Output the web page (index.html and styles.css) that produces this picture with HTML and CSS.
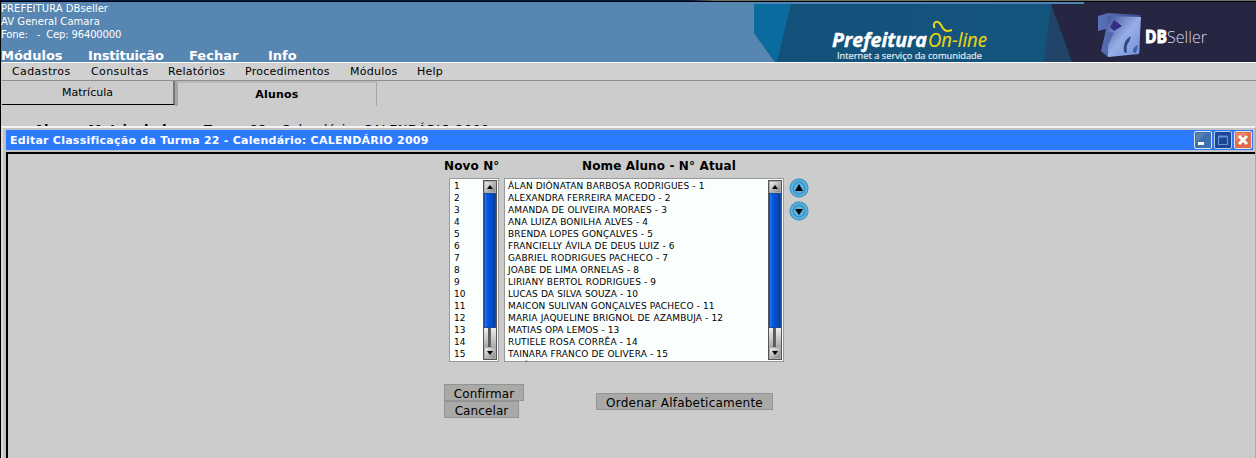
FILE: index.html
```html
<!DOCTYPE html>
<html lang="pt-BR">
<head>
<meta charset="utf-8">
<title>Prefeitura On-line</title>
<link rel="stylesheet" href="styles.css">
</head>
<body>
<div class="page">
  <div class="strip"></div>
  <header class="header">
    <div class="header-main">
      <div class="org"><span>PREFEITURA DBseller</span><span>AV General Camara</span><span class="pre">Fone:   -  Cep: 96400000</span></div>
      <nav class="modules"><span>Módulos</span><span>Instituição</span><span>Fechar</span><span>Info</span></nav>
    </div>
    <svg class="banner" width="502" height="60" viewBox="754 2 502 60">
      <defs>
        <linearGradient id="sea" x1="0" x2="1"><stop offset="0" stop-color="#13517a"/><stop offset=".8" stop-color="#14567f"/><stop offset="1" stop-color="#165985"/></linearGradient>
        <linearGradient id="cube" x1="0" y1="0" x2="1" y2="1"><stop offset="0" stop-color="#3d5299"/><stop offset=".5" stop-color="#98aee6"/><stop offset="1" stop-color="#6f8fd8"/></linearGradient>
        <linearGradient id="side" x1="0" x2="1"><stop offset="0" stop-color="#5a72b8"/><stop offset="1" stop-color="#3c4e98"/></linearGradient>
      </defs>
      <path d="M754 4H1256V62H775L754 33Z" fill="url(#sea)"/>
      <path d="M754 4H791L777 62H775L754 33Z" fill="#0a6c9e"/>
      <path d="M1051 4H1256V62H1044Z" fill="#214569"/>
      <path d="M1084 2H1256V62H1072L1051 4H1084Z" fill="#262642"/>
      <path d="M754 2H1084V4H754Z" fill="#4d86b3"/>
      <text class="logo-bold" x="832" y="47" textLength="95" lengthAdjust="spacingAndGlyphs">Prefeitura</text>
      <text class="logo-light" x="928" y="47" textLength="59" lengthAdjust="spacingAndGlyphs">On-line</text>
      <path d="M934.500 28C932 21 938 20 941 25C944 31 946 32 952 30" fill="none" stroke="#ead512" stroke-width="2"/>
      <text class="logo-sub" x="837" y="58.500" textLength="145" lengthAdjust="spacingAndGlyphs">Internet a serviço da comunidade</text>
      <g class="cube">
        <path d="M1098 16L1108 13L1140 15V52L1108 57L1101 51L1105 34L1106 29L1098 31Z" fill="url(#side)"/>
        <path d="M1108 16L1141 17L1139 54L1108 57L1108 45L1114 33L1107 31Z" fill="url(#cube)"/>
        <path d="M1114 20L1122 26L1114 31L1110 27Z" fill="#332d83"/>
        <path d="M1124 52C1123 43 1126 39 1131 36L1129 42C1127 44 1126 47 1127 53Z" fill="#334486"/>
        <path d="M1133 52C1133 48 1135 46 1138 45L1136 53Z" fill="#465ba5"/>
      </g>
      <text class="db" x="1145" y="43" textLength="22" lengthAdjust="spacingAndGlyphs">DB</text>
      <text class="seller" x="1167" y="43" textLength="40" lengthAdjust="spacingAndGlyphs">Seller</text>
    </svg>
  </header>
  <nav class="menu"><span>Cadastros</span><span>Consultas</span><span>Relatórios</span><span>Procedimentos</span><span>Módulos</span><span>Help</span></nav>
  <div class="tabs"><div class="tab">Matrícula</div><div class="tab active">Alunos</div></div>
  <div class="behind"><b>Alunos Matriculados</b><span>Turma 22 - Calendário: CALENDÁRIO 2009</span></div>
  <section class="window">
    <div class="titlebar">
      <span class="title">Editar Classificação da Turma 22 - Calendário: CALENDÁRIO 2009</span>
      <div class="controls">
        <svg width="18" height="18" viewBox="0 0 18 18"><rect x=".5" y=".5" width="17" height="17" rx="1.500" fill="#3e70b0" stroke="#d9e3ea"/><path d="M2 2H12L2 12Z" fill="#547fb0"/><path d="M4 11H10V14H4Z" fill="#fff"/></svg>
        <svg width="18" height="18" viewBox="0 0 18 18"><rect x=".5" y=".5" width="17" height="17" rx="1.500" fill="#1d4595" stroke="#b9cbe2"/><path d="M4.500 5H13.500V13.500H4.500ZM4 6H14" fill="none" stroke="#6493d7" stroke-width="1.200"/></svg>
        <svg width="18" height="18" viewBox="0 0 18 18"><rect x=".5" y=".5" width="17" height="17" rx="1.500" fill="#df6d4d" stroke="#f2ded8"/><path d="M2 2H13L2 10Z" fill="#e78b70"/><path d="M5 5L13 13M13 5L5 13" stroke="#fff" stroke-width="3"/></svg>
      </div>
    </div>
    <div class="client">
      <div class="form">
        <div class="headings"><b class="h-new">Novo N°</b><b class="h-name">Nome Aluno - N° Atual</b></div>
        <div class="lists">
          <div class="list numbers">
            <ol><li>1</li><li>2</li><li>3</li><li>4</li><li>5</li><li>6</li><li>7</li><li>8</li><li>9</li><li>10</li><li>11</li><li>12</li><li>13</li><li>14</li><li>15</li></ol>
            <div class="scroll"><i class="arrow"><svg width="6" height="4"><path d="M0 4L3 0L6 4Z"/></svg></i><i class="thumb"></i><i class="track"></i><i class="arrow"><svg width="6" height="4"><path d="M0 0H6L3 4Z"/></svg></i></div>
          </div>
          <div class="list names">
            <ol><li>ÁLAN DIÔNATAN BARBOSA RODRIGUES - 1</li><li>ALEXANDRA FERREIRA MACEDO - 2</li><li>AMANDA DE OLIVEIRA MORAES - 3</li><li>ANA LUIZA BONILHA ALVES - 4</li><li>BRENDA LOPES GONÇALVES - 5</li><li>FRANCIELLY ÁVILA DE DEUS LUIZ - 6</li><li>GABRIEL RODRIGUES PACHECO - 7</li><li>JOABE DE LIMA ORNELAS - 8</li><li>LIRIANY BERTOL RODRIGUES - 9</li><li>LUCAS DA SILVA SOUZA - 10</li><li>MAICON SULIVAN GONÇALVES PACHECO - 11</li><li>MARIA JAQUELINE BRIGNOL DE AZAMBUJA - 12</li><li>MATIAS OPA LEMOS - 13</li><li>RUTIELE ROSA CORRÊA - 14</li><li>TAINARA FRANCO DE OLIVERA - 15</li><li>VITÔRIA</li></ol>
            <div class="scroll"><i class="arrow"><svg width="6" height="4"><path d="M0 4L3 0L6 4Z"/></svg></i><i class="thumb"></i><i class="track"></i><i class="arrow"><svg width="6" height="4"><path d="M0 0H6L3 4Z"/></svg></i></div>
          </div>
          <div class="movers">
            <svg width="20" height="20" viewBox="0 0 20 20"><circle cx="10" cy="10" r="9.700" fill="#4a9dc8"/><circle cx="10" cy="10" r="7.800" fill="#62c0ef"/><circle cx="10" cy="10" r="6" fill="#58b0df" stroke="#3f8fbb" stroke-width="1.500"/><path d="M6 13L10 6L14 13Z"/></svg>
            <svg width="20" height="20" viewBox="0 0 20 20"><circle cx="10" cy="10" r="9.700" fill="#4a9dc8"/><circle cx="10" cy="10" r="7.800" fill="#62c0ef"/><circle cx="10" cy="10" r="6" fill="#58b0df" stroke="#3f8fbb" stroke-width="1.500"/><path d="M6 8H14L10 14Z"/></svg>
          </div>
        </div>
        <div class="actions">
          <div class="pair"><button>Confirmar</button><button class="cancel">Cancelar</button></div>
          <button class="sort">Ordenar Alfabeticamente</button>
        </div>
      </div>
    </div>
  </section>
</div>
</body>
</html>
```

FILE: styles.css
```css
* { box-sizing: border-box; }
body { margin: 0; background: #ccc; font: 11px/13px "DejaVu Sans", sans-serif; color: #000; overflow: hidden; }
span, b, li, button { white-space: nowrap; }
.page { width: 1256px; height: 458px; border-left: 1px solid #000; overflow: hidden; }
.strip { height: 2px; border-bottom: 1px solid #000; background: linear-gradient(90deg, #001b50 691px, #687069 713px); }
.header { display: flex; height: 60px; background: #5786b2; color: #fff; }
.header-main { width: 753px; }
.org { display: flex; flex-direction: column; font-size: 10px; height: 46px; letter-spacing: .05px; }
.pre { white-space: pre; letter-spacing: -.15px; }
.modules { display: flex; font-size: 13px; font-weight: bold; line-height: 15px; }
.modules span:nth-child(1) { width: 87px; }
.modules span:nth-child(2) { width: 101px; letter-spacing: -.2px; }
.modules span:nth-child(3) { width: 79px; }
.banner { display: block; }
.logo-bold { font: italic bold 19.5px "Open Sans", sans-serif; fill: #fff; stroke: #fff; stroke-width: .4px; }
.logo-light { font: italic 20.5px "Open Sans", sans-serif; fill: #ead512; stroke: #ead512; stroke-width: .2px; }
.logo-sub { font: 9.5px "Open Sans", sans-serif; fill: #e4edf2; stroke: #e4edf2; stroke-width: .2px; }
.cube { filter: blur(.5px); }
.db { font: bold 17px "Open Sans", sans-serif; fill: #fff; stroke: #fff; stroke-width: .9px; }
.seller { font: 300 17px "Open Sans", sans-serif; fill: #d8d8e5; }
.menu { display: flex; height: 19px; padding: 2px 0 0 11px; margin-left: 1px; border-top: 1px solid #fff; border-bottom: 1px solid #8d8d8d; background: #d0d0d0; letter-spacing: .25px; }
.menu span:nth-child(1) { width: 79px; margin-left: -1px; letter-spacing: .4px; }
.menu span:nth-child(2) { width: 77px; letter-spacing: .4px; }
.menu span:nth-child(3) { width: 77px; }
.menu span:nth-child(4) { width: 105px; }
.menu span:nth-child(5) { width: 67px; }
.tabs { display: flex; height: 25px; margin-left: 1px; }
.tab { width: 173px; height: 24px; padding-top: 5px; text-align: center; border-right: 2px solid #777; border-bottom: 1px solid #000; }
.tab.active { width: 202px; height: 25px; padding-top: 5px; border-left: 3px solid #a5a5a5; border-top: 2px solid #b9b9b9; border-right: 1px solid #a5a5a5; border-bottom: 0; font-weight: bold; letter-spacing: .2px; }
.behind { display: flex; height: 20px; padding: 16px 0 0 33px; font-size: 13px; line-height: 15px; overflow: hidden; }
.behind b { width: 170px; }
.behind span { letter-spacing: .3px; }
.window { height: 332px; border-top: 2px solid #f3f3f3; border-left: 2px solid #ddd; border-right: 1px solid #aaa; background: #c3c3c3; padding: 2px 0 0 3px; }
.titlebar { display: flex; justify-content: space-between; height: 20px; margin-right: 2px; padding: 1px 1px 0 4px; background: #2b7aff; color: #fff; }
.title { font-weight: bold; line-height: 19px; letter-spacing: .25px; }
.controls { display: flex; gap: 2px; }
.client { height: 306px; margin-top: 2px; border-top: 2px solid #000; border-left: 2px solid #000; background: #ccc; }
.form { width: 370px; margin-left: 436px; }
.headings { display: flex; height: 24px; padding-top: 4px; font-size: 12px; line-height: 16px; letter-spacing: .13px; }
.h-new { width: 138px; }
.lists { display: flex; padding-left: 5px; height: 184px; }
.list { display: flex; justify-content: space-between; height: 184px; padding: 1px; border: 1px solid #999; background: #fafffe; }
.list ol { margin: 0; padding: 0 0 0 2px; list-style: none; font-size: 9px; line-height: 12px; height: 182px; overflow: hidden; letter-spacing: .13px; }
.numbers { width: 50px; }
.numbers ol { padding-left: 3px; }
.names { width: 280px; margin-left: 5px; }
.scroll { display: flex; flex-direction: column; width: 14px; height: 180px; border: 1px solid #555; }
.arrow { display: flex; align-items: center; justify-content: center; height: 12px; background: linear-gradient(135deg, #eee, #888); border: 1px solid #aaa; }
.thumb { height: 135px; background: linear-gradient(90deg, #247aff, #0057e7 25%, #0948b2 80%, #003b9b); border: 1px solid #174a9e; }
.track { height: 19px; background: linear-gradient(90deg, transparent 4px, #555 4px, #666 7px, transparent 7px), linear-gradient(#eee, #aaa); }
.movers { margin-left: 5px; display: flex; flex-direction: column; gap: 3px; }
.actions { display: flex; align-items: flex-start; padding-top: 22px; }
.pair { display: flex; flex-direction: column; width: 152px; }
button { height: 17px; width: 80px; padding: 2px 0 0; border: 1px solid #949494; background: #a9a9a7; color: #000; font: 12px/14px "DejaVu Sans", sans-serif; letter-spacing: .1px; }
.cancel { width: 75px; }
.sort { width: 177px; margin-top: 9px; letter-spacing: .22px; }
```
